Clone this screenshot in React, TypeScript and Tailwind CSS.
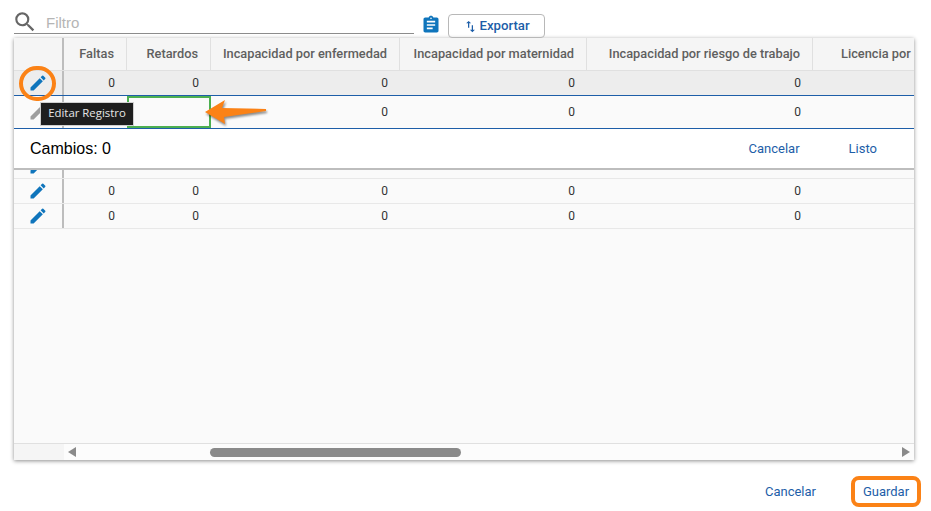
import { MdAssignment, MdEdit, MdSearch, MdSwapVert } from "react-icons/md";

const headers = [
  { label: "Faltas", width: "w-[63px]" },
  { label: "Retardos", width: "w-[84px]" },
  { label: "Incapacidad por enfermedad", width: "w-[189px]" },
  { label: "Incapacidad por maternidad", width: "w-[187px]" },
  { label: "Incapacidad por riesgo de trabajo", width: "w-[226px]" },
];

function Cells() {
  return (
    <>
      {headers.map((h, i) => (
        <div key={i} className={`${h.width} shrink-0 pr-[12px] text-right`}>
          0
        </div>
      ))}
    </>
  );
}

function EditCell({ gray }: { gray?: boolean }) {
  return (
    <div className="flex h-full w-[50px] shrink-0 items-center justify-center border-r-2 border-[#bdbdbd]">
      <MdEdit className={gray ? "text-[20px] text-[#9e9e9e]" : "text-[20px] text-[#0f75bc]"} />
    </div>
  );
}

export default function App() {
  return (
    <div className="relative h-[511px] w-[931px] overflow-hidden bg-white font-['Roboto',sans-serif] text-[12px] text-[#333333]">
      {/* filter bar */}
      <div className="flex h-[38px] items-end pl-[14px]">
        <div className="mb-[4px] flex h-[24px] w-[400px] items-center border-b border-[#8c8c8c]">
          <MdSearch className="ml-[-2px] mt-[1px] text-[26px] text-[#666666]" />
          <span className="ml-[8px] mt-[3px] font-['Liberation_Sans',sans-serif] text-[15px] text-[#b5b5b5]">Filtro</span>
        </div>
        <MdAssignment className="mb-[3px] ml-[7px] text-[20px] text-[#0f75bc]" />
        <button className="ml-[7px] flex h-[24px] w-[97px] items-center justify-center gap-[1px] rounded-[4px] border border-[#b8b8b8] text-[13.2px] font-medium text-[#1d5ea8]">
          <MdSwapVert className="text-[15px]" />
          Exportar
        </button>
      </div>

      {/* table card */}
      <div className="ml-[14px] flex h-[422px] w-[900px] flex-col overflow-hidden bg-[#fafafa] shadow-[0_1px_4px_rgba(0,0,0,0.45)]">
        <div className="flex h-[33px] shrink-0 items-center border-b border-[#e0e0e0] bg-[#f5f5f5] text-[12.8px] font-medium text-[#5f5f5f]">
          <div className="h-full w-[50px] shrink-0 border-r-2 border-[#bdbdbd]" />
          {headers.map((h, i) => (
            <div key={i} className={`flex h-full ${h.width} shrink-0 items-center justify-end border-r border-[#e0e0e0] pr-[12px]`}>
              {h.label}
            </div>
          ))}
          <div className="whitespace-nowrap pl-[28px]">Licencia por</div>
        </div>

        <div className="flex h-[25px] shrink-0 items-center border-b border-[#1d5ea8] bg-[#ededed]">
          <EditCell />
          <Cells />
        </div>

        <div className="relative flex h-[33px] shrink-0 items-center border-b border-[#1d5ea8] bg-[#fafafa]">
          <EditCell gray />
          <div className="w-[63px] shrink-0" />
          <div className="h-full w-[84px] shrink-0 border-2 border-[#4caf50]" />
          {headers.slice(2).map((h, i) => (
            <div key={i} className={`${h.width} shrink-0 pr-[12px] text-right`}>
              0
            </div>
          ))}
        </div>

        <div className="flex h-[41px] shrink-0 items-center border-b-2 border-[#bdbdbd] bg-white pl-[16px]">
          <span className="font-['Liberation_Sans',sans-serif] text-[16px] text-black">Cambios: 0</span>
          <span className="ml-auto text-[13px] text-[#1d5ea8]">Cancelar</span>
          <span className="ml-[49px] mr-[37px] text-[13px] text-[#1d5ea8]">Listo</span>
        </div>

        <div className="flex h-[9px] shrink-0 items-end overflow-hidden border-b border-[#e8e8e8]">
          <div className="flex h-[25px] w-[50px] shrink-0 items-center justify-center border-r-2 border-[#bdbdbd]">
            <MdEdit className="text-[20px] text-[#0f75bc]" />
          </div>
        </div>
        <div className="flex h-[25px] shrink-0 items-center border-b border-[#e8e8e8]">
          <EditCell />
          <Cells />
        </div>
        <div className="flex h-[25px] shrink-0 items-center border-b border-[#e8e8e8]">
          <EditCell />
          <Cells />
        </div>

        <div className="flex-1" />

        {/* horizontal scrollbar */}
        <div className="flex h-[17px] shrink-0 items-center border-t border-[#e0e0e0] bg-[#fcfcfc]">
          <div className="h-full w-[50px] shrink-0 bg-[#f5f5f5]" />
          <div className="ml-[4px] h-0 w-0 border-y-[5px] border-r-[8px] border-y-transparent border-r-[#8a8a8a]" />
          <div className="ml-[134px] h-[9px] w-[251px] rounded-full bg-[#8a8a8a]" />
          <div className="ml-auto mr-[4px] h-0 w-0 border-y-[5px] border-l-[8px] border-y-transparent border-l-[#8a8a8a]" />
        </div>
      </div>

      {/* footer actions */}
      <div className="mt-[16px] flex items-center justify-end pr-[10px] text-[13px] text-[#1d5ea8]">
        <span className="mr-[35px]">Cancelar</span>
        <span className="flex h-[31px] w-[70px] items-center justify-center rounded-[8px] border-[4px] border-[#fb8216]">Guardar</span>
      </div>

      {/* annotations */}
      <div className="absolute left-[19px] top-[66px] h-[35px] w-[37px] rounded-full border-[4px] border-[#fb8216]" />
      <div className="absolute left-[40px] top-[102px] flex h-[24px] w-[94px] items-center justify-center whitespace-nowrap border border-[#d0d0d0] bg-[#1e1e1e] pb-[2px] font-['Open_Sans',sans-serif] text-[11.4px] text-[#e6e6e6]">
        Editar Registro
      </div>
      <svg className="absolute left-[200px] top-[97px] drop-shadow-[1px_2px_1px_rgba(0,0,0,0.45)]" width="70" height="32" viewBox="0 0 70 32">
        <path d="M5 15 L25 3 L22 11 L66 12 L66 14 L24 20 L25 27 Z" fill="#fb8216" />
      </svg>
    </div>
  );
}
